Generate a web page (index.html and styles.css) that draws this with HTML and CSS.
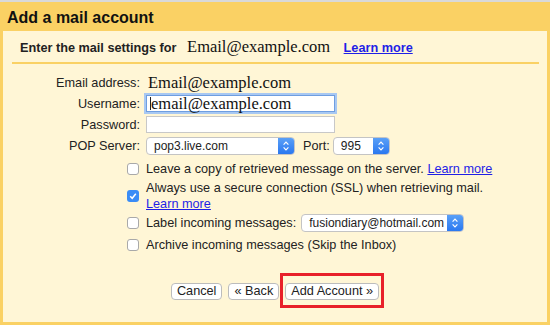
FILE: index.html
```html
<!DOCTYPE html>
<html lang="en">
<head>
    <meta charset="UTF-8">
    <meta name="viewport" content="width=device-width, initial-scale=1.0">
    <title>Add a mail account</title>
    <link rel="stylesheet" href="styles.css">
</head>
<body>
    <div class="frame">
        <h1 class="title">Add a mail account</h1>

        <div class="panel">
            <div class="intro">
                <b>Enter the mail settings for</b>
                <span class="serif intro-addr">Email@example.com</span>
                <a href="#" class="link intro-link">Learn more</a>
            </div>
            <div class="divider"></div>

            <div class="form">
                <label>Email address:</label>
                <div class="serif value">Email@example.com</div>

                <label>Username:</label>
                <div><div class="input focused"><span class="caret"></span><span class="serif">email@example.com</span></div></div>

                <label>Password:</label>
                <div><div class="input"></div></div>

                <label>POP Server:</label>
                <div class="pop-row">
                    <div class="select pop-select">
                        <span class="select-text">pop3.live.com</span>
                        <span class="select-arrow"><svg width="8" height="12" viewBox="0 0 8 12"><path d="M1.6 4.6 L4 2.2 L6.4 4.6 M1.6 7.4 L4 9.8 L6.4 7.4" fill="none" stroke="#fff" stroke-width="1.2"/></svg></span>
                    </div>
                    <span class="port-label">Port:</span>
                    <div class="select port-select">
                        <span class="select-text">995</span>
                        <span class="select-arrow"><svg width="8" height="12" viewBox="0 0 8 12"><path d="M1.6 4.6 L4 2.2 L6.4 4.6 M1.6 7.4 L4 9.8 L6.4 7.4" fill="none" stroke="#fff" stroke-width="1.2"/></svg></span>
                    </div>
                </div>
            </div>

            <div class="options">
                <div class="opt">
                    <span class="check"></span>
                    <span>Leave a copy of retrieved message on the server. <a href="#" class="link">Learn more</a></span>
                </div>
                <div class="opt opt-tall">
                    <span class="check checked"><svg width="12" height="12" viewBox="0 0 12 12"><path d="M3.2 6.3 L5.2 8.3 L8.8 3.8" fill="none" stroke="#fff" stroke-width="1.5"/></svg></span>
                    <span>Always use a secure connection (SSL) when retrieving mail.<br><a href="#" class="link">Learn more</a></span>
                </div>
                <div class="opt">
                    <span class="check"></span>
                    <span>Label incoming messages:</span>
                    <div class="select label-select">
                        <span class="select-text">fusiondiary@hotmail.com</span>
                        <span class="select-arrow"><svg width="8" height="12" viewBox="0 0 8 12"><path d="M1.6 4.6 L4 2.2 L6.4 4.6 M1.6 7.4 L4 9.8 L6.4 7.4" fill="none" stroke="#fff" stroke-width="1.2"/></svg></span>
                    </div>
                </div>
                <div class="opt">
                    <span class="check"></span>
                    <span>Archive incoming messages (Skip the Inbox)</span>
                </div>
            </div>

            <div class="actions">
                <button class="btn">Cancel</button>
                <button class="btn">&laquo; Back</button>
                <span class="highlight"><button class="btn">Add Account &raquo;</button></span>
            </div>
        </div>
    </div>
</body>
</html>
```

FILE: styles.css
```css
body {
    margin: 0;
    font-family: "Liberation Sans", Arial, sans-serif;
    font-size: 12.7px;
    color: #222;
}
.frame {
    border-top: 2px solid #d9d9d9;
    background-color: #fad164;
    padding: 0 3px 3px 3px;
}
.title {
    margin: 0;
    height: 29px;
    box-sizing: border-box;
    padding: 2px 0 0 4px;
    font-size: 16px;
    line-height: 27px;
    color: #111;
}
.panel {
    background-color: #fff6d6;
    height: 291px;
}
.serif {
    font-family: "Liberation Serif", "Times New Roman", serif;
    font-size: 16.5px;
    color: #111;
}
.link {
    color: #1f1fe6;
    text-decoration: underline;
}
.intro {
    height: 31px;
    line-height: 31px;
    padding-left: 17px;
    white-space: nowrap;
}
.intro-addr {
    margin-left: 7px;
}
.intro-link {
    margin-left: 10px;
    font-weight: bold;
}
.divider {
    height: 2px;
    margin: 0 8px 0 9px;
    background-color: #fad164;
}
.form {
    display: grid;
    grid-template-columns: 137px auto;
    column-gap: 6px;
    grid-auto-rows: 21px;
    align-items: center;
    margin-top: 8px;
}
.form label {
    text-align: right;
}
.value {
    padding-left: 2px;
}
.input {
    box-sizing: border-box;
    width: 189px;
    height: 17px;
    background-color: #fff;
    border: 1px solid #c8c8c8;
    display: flex;
    align-items: center;
    padding-left: 3px;
    line-height: 15px;
}
.input.focused {
    border-color: #6f9ee0;
    box-shadow: 0 0 0 2px #a8c8f2;
}
.caret {
    width: 1px;
    height: 13px;
    background-color: #222;
}
.pop-row {
    display: flex;
    align-items: center;
}
.select {
    box-sizing: border-box;
    height: 18px;
    background-color: #fff;
    border: 1px solid #c4c4c4;
    border-radius: 4px;
    display: flex;
    align-items: center;
    font-size: 12px;
    color: #222;
    overflow: hidden;
}
.select-text {
    flex: 1;
    padding-left: 7px;
    white-space: nowrap;
}
.select-arrow {
    width: 16px;
    height: 100%;
    display: flex;
    align-items: center;
    justify-content: center;
    background: linear-gradient(#5aa0f7, #2a78f0);
}
.pop-select {
    width: 149px;
}
.port-label {
    margin-left: 8px;
}
.port-select {
    width: 57px;
    margin-left: 3px;
}
.label-select {
    width: 163px;
    margin-left: 5px;
}
.options {
    margin-top: 2px;
    padding-left: 124px;
}
.opt {
    display: flex;
    align-items: center;
    height: 22px;
    white-space: nowrap;
}
.opt-tall {
    height: 32px;
    line-height: 16px;
}
.check {
    box-sizing: border-box;
    width: 12px;
    height: 12px;
    flex-shrink: 0;
    margin-right: 7px;
    background-color: #fff;
    border: 1px solid #a9a9a9;
    border-radius: 3px;
    display: flex;
    align-items: center;
    justify-content: center;
}
.check.checked {
    border: none;
    background-color: #3a8cf6;
}
.actions {
    margin-top: 27px;
    display: flex;
    justify-content: center;
    gap: 6px;
}
.btn {
    height: 17px;
    padding: 0 5px;
    font-family: "Liberation Sans", Arial, sans-serif;
    font-size: 12.7px;
    line-height: 15px;
    color: #222;
    background-color: #fff;
    border: 1px solid #bcbcbc;
    border-radius: 4px;
}
.highlight {
    position: relative;
    display: flex;
}
.highlight::after {
    content: "";
    position: absolute;
    top: -10px;
    right: -5px;
    bottom: -8px;
    left: -5px;
    border: 3px solid #e8202a;
}
```
